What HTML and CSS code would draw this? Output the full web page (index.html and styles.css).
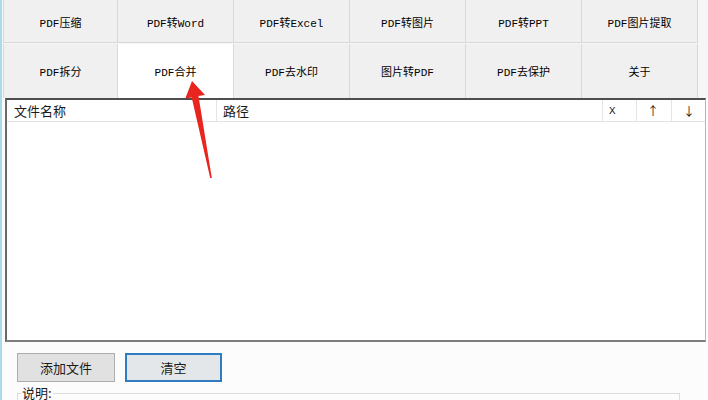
FILE: index.html
```html
<!DOCTYPE html>
<html lang="zh-CN">
<head>
    <meta charset="UTF-8">
    <meta name="viewport" content="width=device-width, initial-scale=1.0">
    <title>PDF合并</title>
    <link rel="stylesheet" href="styles.css">
</head>
<body>

    <div class="app">
        <div class="tabs">
            <div class="tab-row row-back">
                <div class="tab">PDF压缩</div>
                <div class="tab">PDF转Word</div>
                <div class="tab">PDF转Excel</div>
                <div class="tab">PDF转图片</div>
                <div class="tab">PDF转PPT</div>
                <div class="tab">PDF图片提取</div>
            </div>
            <div class="tab-row row-front">
                <div class="tab">PDF拆分</div>
                <div class="tab active">PDF合并</div>
                <div class="tab">PDF去水印</div>
                <div class="tab">图片转PDF</div>
                <div class="tab">PDF去保护</div>
                <div class="tab">关于</div>
            </div>
        </div>

        <div class="page">
            <div class="file-list">
                <div class="list-head">
                    <div class="col col-name">文件名称</div>
                    <div class="col col-path">路径</div>
                    <div class="col col-small mono">X</div>
                    <div class="col col-small">↑</div>
                    <div class="col col-small col-last">↓</div>
                </div>
                <div class="list-body"></div>
            </div>

            <div class="actions">
                <button type="button" class="btn">添加文件</button>
                <button type="button" class="btn btn-focus">清空</button>
            </div>

            <fieldset class="group">
                <legend>说明:</legend>
            </fieldset>
        </div>
    </div>

    <!-- 标注箭头 -->
    <svg class="pointer" width="708" height="400" viewBox="0 0 708 400">
        <polygon points="192,81 205,95 198.5,96 211.8,178 210.2,178 191.7,97.4 185.3,98.6" fill="#e8251f"/>
    </svg>

</body>
</html>
```

FILE: styles.css
```css
* { box-sizing: border-box; margin: 0; padding: 0; }
body {
    width: 708px;
    height: 400px;
    overflow: hidden;
    position: relative;
    background: #fcfcfc;
    border-left: 2px solid #a8dcea;
    font-family: "Noto Sans CJK SC", "Liberation Sans", sans-serif;
    color: #1a1a1a;
}
.app {
    display: flex;
    flex-direction: column;
    height: 100%;
}
.tabs {
    padding-left: 1px;
    background: #f6f6f6;
}
.tab-row {
    display: grid;
    grid-template-columns: 115px repeat(5, 116px);
}
.tab {
    display: flex;
    align-items: center;
    justify-content: center;
    background: #f0f0f0;
    border-right: 1px solid #d9d9d9;
    border-bottom: 1px solid #d9d9d9;
    font-family: "Liberation Mono", "Noto Sans CJK SC", monospace;
    font-size: 11px;
    color: #000;
}
.tab:first-child { border-left: 1px solid #d9d9d9; }
.row-back .tab { height: 43px; padding-top: 1px; }
.row-front .tab { height: 54px; border-bottom: none; }
.row-front { margin-top: 1px; }
.tab.active { background: #ffffff; }

.page {
    flex: 1;
    padding-left: 3px;
}
.file-list {
    width: 701px;
    height: 244px;
    display: flex;
    flex-direction: column;
    background: #ffffff;
    border-top: 2px solid #4e4e4e;
    border-left: 2px solid #6a6a6a;
    border-bottom: 2px solid #7d7d7d;
    border-right: 1px solid #b5b5b5;
}
.list-head {
    display: flex;
    height: 22px;
    border-bottom: 1px solid #e3e3e3;
    font-size: 13px;
}
.col {
    display: flex;
    align-items: center;
    border-right: 1px solid #e5e5e5;
}
.col-name { width: 210px; padding-left: 7px; }
.col-path { width: 386px; padding-left: 6px; }
.col-small { width: 35px; padding-left: 10px; font-size: 12px; }
.col-small.mono { width: 34px; padding-left: 6px; }
.col-last { border-right: none; flex: 1; padding-left: 11px; }
.mono { font-family: "Liberation Mono", monospace; font-size: 11px; }
.list-body { flex: 1; }

.actions {
    display: flex;
    gap: 10px;
    padding-left: 12px;
    margin-top: 11px;
}
.btn {
    width: 98px;
    height: 29px;
    background: #e1e1e1;
    border: 1px solid #adadad;
    font-family: "Noto Sans CJK SC", sans-serif;
    font-size: 13px;
    color: #1a1a1a;
}
.btn-focus {
    width: 97px;
    border: 2px solid #2f7cc0;
    background: #e4e7ea;
}
.group {
    margin: 3px 0 0 12px;
    width: 663px;
    height: 14px;
    border: 1px solid #dcdcdc;
    border-bottom: none;
    padding: 0 3px;
}
.group legend {
    font-size: 13px;
    line-height: 16px;
    padding: 0 1px;
}
.pointer {
    position: absolute;
    left: -2px;
    top: 0;
    pointer-events: none;
}
```
